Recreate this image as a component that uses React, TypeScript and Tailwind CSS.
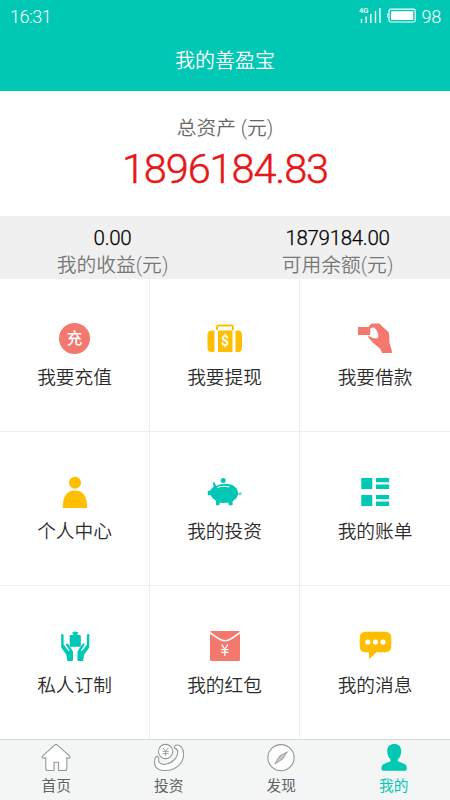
import React from "react";

const TEAL = "#00c8b4";
const CORAL = "#f4786e";
const AMBER = "#ffbf00";

const Recharge = () => (
  <div className="flex h-10 w-10 items-center justify-center">
    <span className="mt-px flex h-[31px] w-[31px] items-center justify-center rounded-full bg-[#f4786e] pt-[3px] text-[15.5px] leading-none font-medium text-white">
      充
    </span>
  </div>
);

const Icon = ({ children }: { children: React.ReactNode }) => (
  <svg className="h-10 w-10" viewBox="0 0 40 40">
    {children}
  </svg>
);

const Withdraw = () => (
  <Icon>
    <path d="M12 12V9.5Q12 7.5 14 7.5H26Q28 7.5 28 9.5V12" fill="none" stroke={AMBER} strokeWidth="2" />
    <path d="M9.5 12.5V34H6.5Q2.5 34 2.5 29.5V17Q2.5 12.5 6.5 12.5ZM30.5 12.5V34H33Q37 34 37 29.5V17Q37 12.5 33 12.5Z" fill={AMBER} />
    <rect x="13" y="12.5" width="14.5" height="21.5" fill={AMBER} />
    <text x="20" y="28" textAnchor="middle" fill="white" fontSize="14" fontWeight="700" fontFamily="Roboto">$</text>
  </Icon>
);

const Borrow = () => (
  <Icon>
    <path d="M13.5 9.2Q15.2 5.6 18 5.4H24.3L27 8.2L33.2 13.8Q34.2 15 34.2 17L34.5 25L36.8 32.5V35H27L25.5 31L18 24.7L13.8 20.2L13 17.6Q18 20.8 21.5 20.6Q23.8 19.4 23.3 16.2Q22.3 11.8 19.2 9.6Q17.5 9 15.6 10.4Z" fill={CORAL} />
    <path d="M3 9H15.3V17H3Z" fill={CORAL} />
  </Icon>
);

const Profile = () => (
  <Icon>
    <circle cx="20" cy="10.7" r="6" fill={AMBER} />
    <path d="M7.7 36C7.7 24 12 18.4 20 18.4S32.2 24 32.2 36Z" fill={AMBER} />
  </Icon>
);

const Piggy = () => (
  <Icon>
    <circle cx="18.2" cy="8.6" r="2.5" fill={TEAL} />
    <path d="M8 9.8Q10.5 10.6 11.2 14.1Q15 11.8 20 11.8C28 11.8 33 16 33 21C33 25 30.7 27.5 27.6 29.2V33.3H24L23.3 30.6Q18.5 31.6 14.9 30.5L14.3 33.3H11V28.8Q7 26.6 5.7 23.2H2.8V19L5.3 18.5Q6.5 16 8.5 15Z" fill={TEAL} />
    <path d="M12.5 15.4Q18 13.4 24.3 14.9" fill="none" stroke="white" strokeWidth="1.1" />
    <path d="M32.5 20.8Q36 24 36.5 21.6Q36.2 19.6 34.2 21.6" fill="none" stroke={TEAL} strokeWidth=".9" />
  </Icon>
);

const Bills = () => (
  <Icon>
    <path d="M6.3 6H17.3V17H6.3ZM21 6H34.2V10.2H21ZM21 12.5H34.2V17H21ZM6.3 23H17.3V34H6.3ZM21 23H34.2V27.2H21ZM21 29.5H34.2V34H21Z" fill={TEAL} />
  </Icon>
);

const Custom = () => (
  <Icon>
    <path d="M15.5 9H18.5L17 6L19 6.4L20 5L21.4 6.3L23.2 5.7L22.3 9H24.7Q25.8 9 25.8 10V20.7H14.7V10Q14.7 9 15.5 9Z" fill={TEAL} />
    <path id="left-hand" d="M6.2 8.3Q7.8 7.5 8.6 9V18.5L13.7 25.2L14.6 24.5L10.8 18.7Q11.3 16.8 13 18L17.8 25Q18.2 26 18 27.5V33.8Q18 35 17 35H12.3L11.4 28.8L6.7 22.2Q6.2 21.5 6.2 20.5Z" fill={TEAL} />
    <use href="#left-hand" transform="translate(40.5 0) scale(-1 1)" />
  </Icon>
);

const RedPacket = () => (
  <Icon>
    <rect x="5" y="5" width="30" height="30" rx="1.5" fill={CORAL} />
    <path d="M5 6.8C11 10.2 14.5 14.7 20 14.7S29 10.2 35 6.8" fill="none" stroke="white" strokeWidth="1.6" />
    <path d="M16.7 18.4L19.8 23.3L22.9 18.4M19.8 23.3V30M16.2 23.5H23.4M16.2 26.4H23.4" fill="none" stroke="white" strokeWidth="1.25" />
  </Icon>
);

const Messages = () => (
  <Icon>
    <path d="M11 5.7H30Q36.3 5.7 36.3 12V20Q36.3 26.3 30 26.3H21.5L14.3 33.3L13.8 26.3H11Q4.7 26.3 4.7 20V12Q4.7 5.7 11 5.7Z" fill={AMBER} />
    <g fill="white">
      <circle cx="12.8" cy="16" r="2.6" />
      <circle cx="20.4" cy="16" r="2.6" />
      <circle cx="28" cy="16" r="2.6" />
    </g>
  </Icon>
);

const NavIcon = ({ children }: { children: React.ReactNode }) => (
  <svg className="h-[30px] w-8" viewBox="0 0 32 30" fill="none" stroke="#92989a" strokeWidth="1.1">
    {children}
  </svg>
);

const HomeIcon = () => (
  <NavIcon>
    <path fill="white" strokeLinejoin="round" d="M15 1.8Q16 1 17 1.8L29.7 13.2Q30.6 14.5 29.4 15Q28.2 15.4 26.8 14.8V25.5Q26.8 27.5 24.8 27.5H18.6V19.2H14V27.5H7.8Q5.8 27.5 5.8 25.5V14.8Q4 15.5 2.6 14.8Q1.6 14.2 2.5 13.2Z" />
  </NavIcon>
);

const InvestIcon = () => (
  <NavIcon>
    <path fill="white" d="M22.4 2.3C27 .8 30.6 5.2 30.6 11C30.6 20 23 27.5 12.5 27.5C5 27.5 1.4 24.5 1.5 19Q1.6 15 3.3 13.5Q5.8 13 5.7 15.8C5 20.3 8.5 21.8 12.5 21.2C19 20.1 24.8 15.2 24.7 8.8Q24.6 6 22 5.4Q20.6 4 22.4 2.3Z" />
    <circle cx="12.6" cy="8.5" r="7.1" fill="white" />
    <path strokeWidth=".9" d="M9.8 4.7L12.6 8.3L15.4 4.7M12.6 8.3V13M9.6 8.4H15.6M9.6 10.6H15.6" />
  </NavIcon>
);

const DiscoverIcon = () => (
  <NavIcon>
    <circle cx="16" cy="14.7" r="13.1" fill="white" />
    <path fill="#c8cccd" strokeWidth=".9" d="M22.3 8.8L17.6 16L9.9 20.8L14.5 13.2ZM14.5 13.2L17.6 16" />
    <circle cx="16" cy="14.7" r="1" fill="white" strokeWidth=".5" />
  </NavIcon>
);

const MineIcon = () => (
  <NavIcon>
    <path fill={TEAL} stroke="none" d="M16.2 1C20.5 1 23.2 3.4 23.2 8C23.2 11.5 22 14.5 20 16.2Q19.2 18.2 21 18.8L26 20.8Q28.8 22 28.9 25.5Q28.9 27.8 26 27.8H6.2Q3.4 27.8 3.4 25.5Q3.5 22 6.4 20.8L11.4 18.8Q13.2 18.2 12.4 16.2C10.4 14.5 9.2 11.5 9.2 8C9.2 3.4 11.9 1 16.2 1Z" />
  </NavIcon>
);

const services = [
  { label: "我要充值", Glyph: Recharge },
  { label: "我要提现", Glyph: Withdraw },
  { label: "我要借款", Glyph: Borrow },
  { label: "个人中心", Glyph: Profile },
  { label: "我的投资", Glyph: Piggy },
  { label: "我的账单", Glyph: Bills },
  { label: "私人订制", Glyph: Custom },
  { label: "我的红包", Glyph: RedPacket },
  { label: "我的消息", Glyph: Messages },
];

const tabs = [
  { label: "首页", Glyph: HomeIcon, color: "text-[#606263]" },
  { label: "投资", Glyph: InvestIcon, color: "text-[#606263]" },
  { label: "发现", Glyph: DiscoverIcon, color: "text-[#606263]" },
  { label: "我的", Glyph: MineIcon, color: "text-[#00c8b4]" },
];

export default function App() {
  return (
    <div className="flex h-[800px] w-[450px] flex-col overflow-hidden bg-white font-['Roboto','Noto_Sans_CJK_SC',sans-serif] font-[350]">
      <header className="h-[91px] bg-[#00c8b4] text-white">
        <div className="flex h-8 items-center justify-between pr-[9px] pl-[10px] text-[18px] tracking-[-0.5px]">
          <span>16:31</span>
          <div className="flex items-center">
            <svg className="h-[18px] w-[58px]" viewBox="0 0 58 18" fill="none" stroke="white">
              <path strokeWidth="1.4" d="M2.5 12V16M7.2 9.5V16M11.8 7V16M16.5 4V16M21 1V16" />
              <text x="0" y="6" fill="white" stroke="none" fontSize="7.5" fontWeight="500" letterSpacing="0" fontFamily="Roboto">4G</text>
              <rect x="30" y="2.2" width="26.2" height="12.8" rx="1.8" strokeWidth="1.2" />
              <rect x="32" y="4.2" width="22.2" height="8.8" fill="white" stroke="none" />
              <path d="M28.7 6.5V10.7" />
            </svg>
            <span className="ml-[4px] tracking-[-0.2px]">98</span>
          </div>
        </div>
        <h1 className="mt-[14px] text-center text-[20px] leading-[30px] font-[350]">我的善盈宝</h1>
      </header>

      <section className="flex h-[125px] flex-col items-center pt-[23px]">
        <p className="text-[19.7px] leading-[30px] text-[#666]">总资产 (元)</p>
        <p className="mt-px text-[41.5px] leading-[48px] font-light tracking-[-1.1px] text-[#e71717] [-webkit-text-stroke:0.5px_#e71717]">1896184.83</p>
      </section>

      <section className="grid h-[63px] grid-cols-2 bg-[#f0f0f0] pt-[9px] text-center">
        {[
          ["0.00", "我的收益(元)"],
          ["1879184.00", "可用余额(元)"],
        ].map(([value, label]) => (
          <div key={label}>
            <p className="text-[20.5px] leading-[27px] font-light tracking-[-0.3px] text-black [-webkit-text-stroke:0.25px_black]">{value}</p>
            <p className="text-[19.8px] leading-[27px] text-[#777]">{label}</p>
          </div>
        ))}
      </section>

      <main className="grid h-[460px] grid-cols-3 grid-rows-3">
        {services.map(({ label, Glyph }, i) => (
          <div
            key={label}
            className={`flex flex-col items-center border-[#eee] ${i < 3 ? "pt-[39px]" : "pt-[40px]"} ${i % 3 < 2 ? "border-r" : ""} ${i < 6 ? "border-b" : ""}`}
          >
            <Glyph />
            <span className="mt-[6px] text-[18.7px] leading-7 text-[#2b2b2b]">{label}</span>
          </div>
        ))}
      </main>

      <nav className="grid h-[61px] grid-cols-4 border-t border-[#d7d9d9] bg-[#f4f6f6]">
        {tabs.map(({ label, Glyph, color }) => (
          <div key={label} className={`flex flex-col items-center pt-[3px] ${color}`}>
            <Glyph />
            <span className="mt-[2px] text-[14.7px] leading-[22px] font-normal">{label}</span>
          </div>
        ))}
      </nav>
    </div>
  );
}
